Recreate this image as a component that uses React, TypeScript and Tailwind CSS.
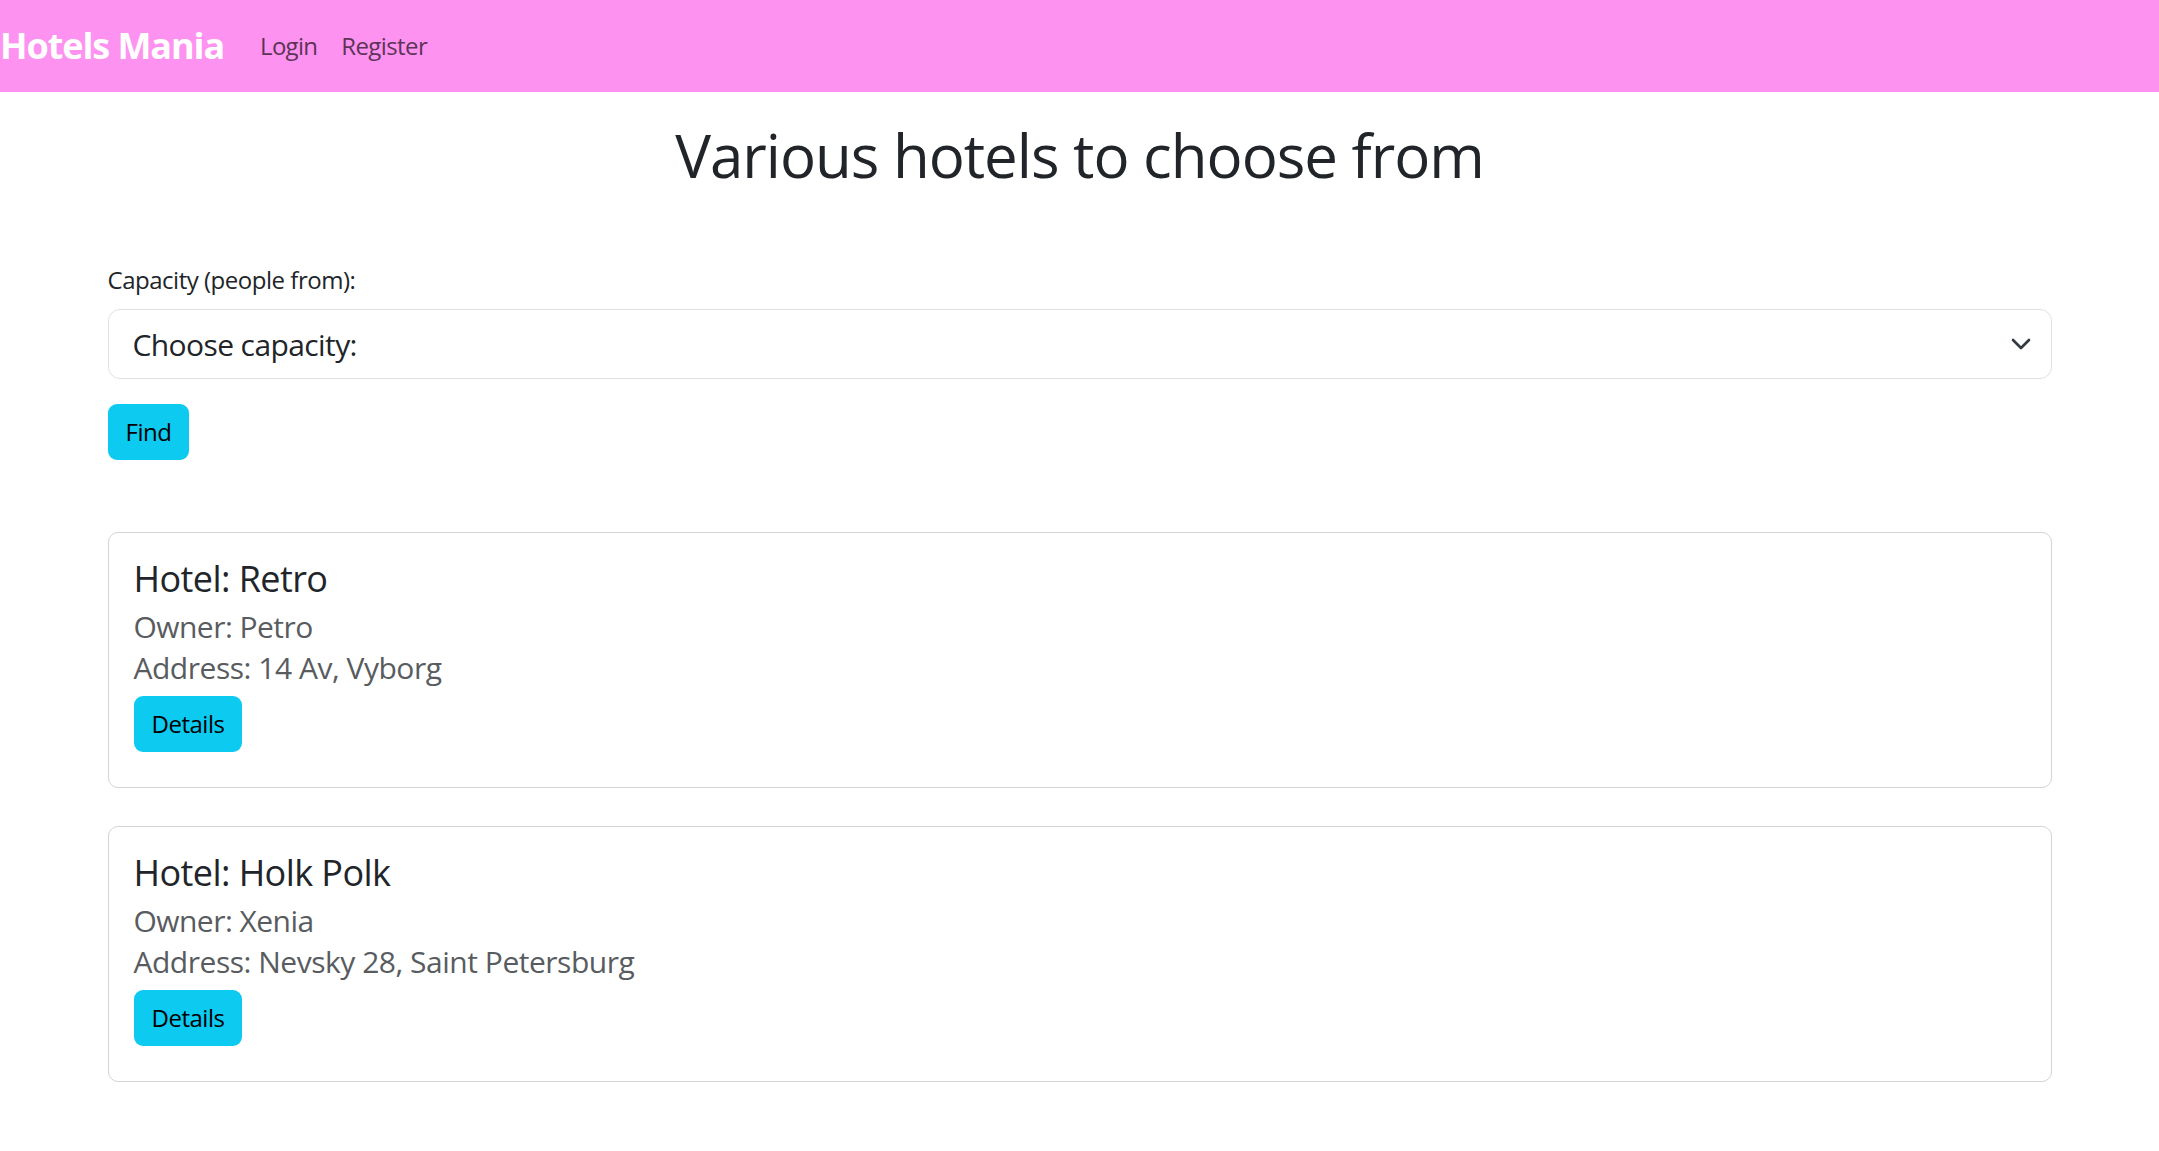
import { useState } from "react"

type Hotel = {
  name: string
  owner: string
  address: string
}

const hotels: Hotel[] = [
  { name: "Retro", owner: "Petro", address: "14 Av, Vyborg" },
  { name: "Holk Polk", owner: "Xenia", address: "Nevsky 28, Saint Petersburg" },
]

function Navbar() {
  return (
    <nav className="h-[92px] bg-[#fe92f0] flex items-center">
      <a href="#" className="mr-[24px] text-[36px] font-bold leading-none tracking-[-0.03em] text-white">
        Hotels Mania
      </a>
      <ul className="flex items-center">
        <li>
          <a href="#" className="block px-[12px] text-[24px] leading-[36px] tracking-[-0.03em] text-[#5c3457]">
            Login
          </a>
        </li>
        <li>
          <a href="#" className="block px-[12px] text-[24px] leading-[36px] tracking-[-0.025em] text-[#5c3457]">
            Register
          </a>
        </li>
      </ul>
    </nav>
  )
}

function HotelCard({ hotel }: { hotel: Hotel }) {
  return (
    <div className="rounded-[10px] border border-[#d4d4d4] bg-white px-[25px] pt-[24px] pb-[35px]">
      <h4 className="text-[36px] font-medium leading-[43px] tracking-[-0.016em] text-[#212529]">
        Hotel: {hotel.name}
      </h4>
      <h5 className="mt-[9px] text-[30px] font-medium leading-[36px] tracking-[-0.018em] text-[#595c5f]">
        Owner: {hotel.owner}
      </h5>
      <h5 className="mt-[5px] text-[30px] font-medium leading-[36px] tracking-[-0.016em] text-[#595c5f]">
        Address: {hotel.address}
      </h5>
      <button className="mt-[10px] h-[56px] rounded-[9px] bg-[#0dcaf0] px-[18px] text-[24px] tracking-[-0.02em] text-black">
        Details
      </button>
    </div>
  )
}

export default function App() {
  const [capacity, setCapacity] = useState("")

  return (
    <div className="min-h-screen bg-white font-['Open_Sans',sans-serif] text-[#212529]">
      <Navbar />

      <main className="mx-auto w-[1944px] pb-[40px]">
        <h1 className="mt-[27px] text-center text-[60px] font-medium leading-[72px] tracking-[-0.017em]">
          Various hotels to choose from
        </h1>

        {/* Filter */}
        <form className="mt-[71px]" onSubmit={(e) => e.preventDefault()}>
          <label htmlFor="capacity" className="block text-[24px] leading-[36px] tracking-[-0.02em]">
            Capacity (people from):
          </label>
          <div className="relative mt-[11px]">
            <select
              id="capacity"
              value={capacity}
              onChange={(e) => setCapacity(e.target.value)}
              className="block h-[70px] w-full appearance-none rounded-[12px] border border-[#dee2e6] bg-white pl-[24px] pr-[60px] text-[30px] tracking-[-0.02em] text-[#212529] outline-none"
            >
              <option value="">Choose capacity:</option>
              <option value="1">1</option>
              <option value="2">2</option>
              <option value="4">4</option>
            </select>
            <svg
              className="pointer-events-none absolute right-[20px] top-[27px] h-[16px] w-[22px]"
              viewBox="0 0 16 12"
              fill="none"
              stroke="#343a40"
              strokeWidth={2}
              strokeLinecap="round"
              strokeLinejoin="round"
            >
              <path d="m2 3 6 6 6-6" />
            </svg>
          </div>
          <button
            type="submit"
            className="mt-[25px] h-[56px] rounded-[9px] bg-[#0dcaf0] px-[18px] text-[24px] tracking-[-0.02em] text-black"
          >
            Find
          </button>
        </form>

        {/* Hotels list */}
        <div className="mt-[72px] flex flex-col gap-[38px]">
          {hotels.map((hotel) => (
            <HotelCard key={hotel.name} hotel={hotel} />
          ))}
        </div>
      </main>
    </div>
  )
}
